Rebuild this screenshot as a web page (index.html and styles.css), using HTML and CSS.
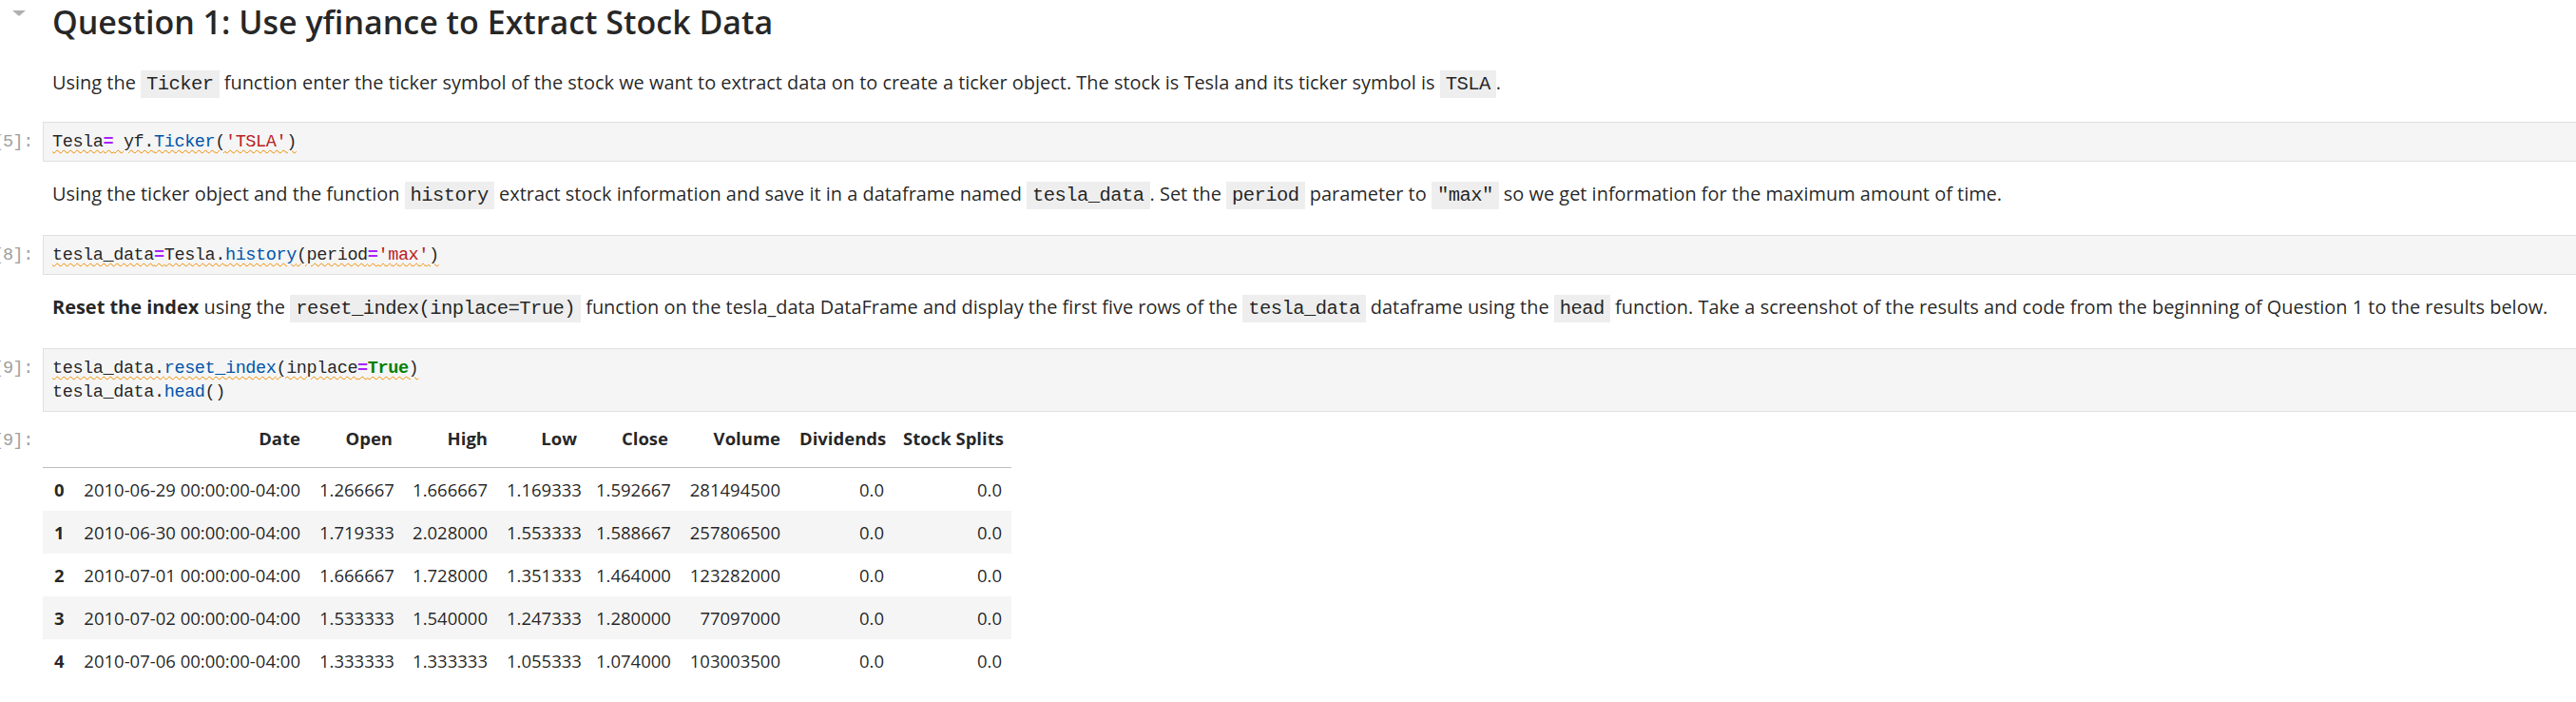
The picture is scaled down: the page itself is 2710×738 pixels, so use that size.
FILE: index.html
```html
<!DOCTYPE html>
<html lang="en">
<head>
<meta charset="utf-8">
<title>Question 1: Use yfinance to Extract Stock Data</title>
<link rel="stylesheet" href="styles.css">
</head>
<body>
<div class="notebook">

  <div class="cell heading-cell">
    <div class="prompt collapser"><span class="caret"></span></div>
    <div class="md"><h1>Question 1: Use yfinance to Extract Stock Data</h1></div>
  </div>

  <div class="cell md-cell md-first">
    <div class="prompt"></div>
    <div class="md"><p>Using the <code>Ticker</code> function enter the ticker symbol of the stock we want to extract data on to create a ticker object. The stock is Tesla and its ticker symbol is <code>TSLA</code>.</p></div>
  </div>

  <div class="cell code-cell">
    <div class="prompt">[5]:</div>
    <div class="editor"><pre><span class="squiggle">Tesla<span class="op">=</span> yf.<span class="fn">Ticker</span>(<span class="str">'TSLA'</span>)</span></pre></div>
  </div>

  <div class="cell md-cell">
    <div class="prompt"></div>
    <div class="md"><p>Using the ticker object and the function <code>history</code> extract stock information and save it in a dataframe named <code>tesla_data</code>. Set the <code>period</code> parameter to <code>"max"</code> so we get information for the maximum amount of time.</p></div>
  </div>

  <div class="cell code-cell">
    <div class="prompt">[8]:</div>
    <div class="editor"><pre><span class="squiggle">tesla_data<span class="op">=</span>Tesla.<span class="fn">history</span>(period<span class="op">=</span><span class="str">'max'</span>)</span></pre></div>
  </div>

  <div class="cell md-cell">
    <div class="prompt"></div>
    <div class="md"><p><strong>Reset the index</strong> using the <code>reset_index(inplace=True)</code> function on the tesla_data DataFrame and display the first five rows of the <code>tesla_data</code> dataframe using the <code>head</code> function. Take a screenshot of the results and code from the beginning of Question 1 to the results below.</p></div>
  </div>

  <div class="cell code-cell">
    <div class="prompt">[9]:</div>
    <div class="editor"><pre><span class="squiggle">tesla_data.<span class="fn">reset_index</span>(inplace<span class="op">=</span><span class="kw">True</span>)</span>
tesla_data.<span class="fn">head</span>()</pre></div>
  </div>

  <div class="cell output-cell">
    <div class="prompt out">[9]:</div>
    <div class="output">
      <table class="df">
        <colgroup>
          <col class="w-idx"><col class="w-date"><col class="w-open"><col class="w-high"><col class="w-low"><col class="w-close"><col class="w-vol"><col class="w-div"><col class="w-split">
        </colgroup>
        <thead>
          <tr><th></th><th>Date</th><th>Open</th><th>High</th><th>Low</th><th>Close</th><th>Volume</th><th>Dividends</th><th>Stock Splits</th></tr>
        </thead>
        <tbody>
          <tr><th>0</th><td>2010-06-29 00:00:00-04:00</td><td>1.266667</td><td>1.666667</td><td>1.169333</td><td>1.592667</td><td>281494500</td><td>0.0</td><td>0.0</td></tr>
          <tr><th>1</th><td>2010-06-30 00:00:00-04:00</td><td>1.719333</td><td>2.028000</td><td>1.553333</td><td>1.588667</td><td>257806500</td><td>0.0</td><td>0.0</td></tr>
          <tr><th>2</th><td>2010-07-01 00:00:00-04:00</td><td>1.666667</td><td>1.728000</td><td>1.351333</td><td>1.464000</td><td>123282000</td><td>0.0</td><td>0.0</td></tr>
          <tr><th>3</th><td>2010-07-02 00:00:00-04:00</td><td>1.533333</td><td>1.540000</td><td>1.247333</td><td>1.280000</td><td>77097000</td><td>0.0</td><td>0.0</td></tr>
          <tr><th>4</th><td>2010-07-06 00:00:00-04:00</td><td>1.333333</td><td>1.333333</td><td>1.055333</td><td>1.074000</td><td>103003500</td><td>0.0</td><td>0.0</td></tr>
        </tbody>
      </table>
    </div>
  </div>

</div>
</body>
</html>
```

FILE: styles.css
```css
html, body {
  margin: 0;
  padding: 0;
  background: #ffffff;
}

body {
  font-family: "Open Sans", "Noto Sans", sans-serif;
  color: rgba(0, 0, 0, 0.87);
  overflow: hidden;
}

.notebook {
  display: flex;
  flex-direction: column;
}

.cell {
  display: flex;
  align-items: flex-start;
}

.prompt {
  flex: none;
  width: 45px;
  box-sizing: border-box;
  padding-right: 10px;
  padding-top: 9px;
  display: flex;
  justify-content: flex-end;
  white-space: nowrap;
  font-family: "Liberation Mono", "DejaVu Sans Mono", monospace;
  font-size: 18.5px;
  letter-spacing: -0.4px;
  line-height: 25px;
  color: #a0a0a0;
}

.collapser {
  justify-content: flex-start;
  padding: 10px 0 0 13px;
}

.caret {
  width: 0;
  height: 0;
  border-left: 7px solid transparent;
  border-right: 7px solid transparent;
  border-top: 6px solid #b0b0b0;
}

.md {
  flex: 1;
  min-width: 0;
  padding-left: 10px;
}

/* heading */
.heading-cell {
  padding-top: 1px;
}

h1 {
  margin: 0;
  font-size: 34px;
  font-weight: 600;
  line-height: 44px;
  color: rgba(0, 0, 0, 0.87);
}

/* markdown */
.md-cell {
  padding-top: 17px;
  padding-bottom: 24px;
}

.md-first {
  padding-top: 25px;
  padding-bottom: 22px;
}

.md p {
  margin: 0;
  font-size: 19.95px;
  line-height: 34px;
  white-space: nowrap;
}

.md strong {
  font-weight: 700;
}

.md code {
  font-family: "Liberation Mono", "DejaVu Sans Mono", monospace;
  font-size: 20.5px;
  letter-spacing: -0.55px;
  background: #eeeeee;
  padding: 3px 6px;
  color: rgba(0, 0, 0, 0.87);
}

/* code cells */
.editor {
  flex: 1;
  min-width: 0;
  background: #f5f5f5;
  border: 1px solid #e0e0e0;
  border-right: 0;
  padding: 8px 9px 7px;
}

.editor pre {
  margin: 0;
  font-family: "Liberation Mono", "DejaVu Sans Mono", monospace;
  font-size: 18.5px;
  letter-spacing: -0.4px;
  line-height: 25px;
  color: rgba(0, 0, 0, 0.87);
}

.squiggle {
  text-decoration-line: underline;
  text-decoration-style: wavy;
  text-decoration-color: #f08c00;
  text-decoration-thickness: 1px;
  text-underline-offset: 3px;
}

.op {
  color: #aa22ff;
  font-weight: 700;
}

.fn {
  color: #0055aa;
}

.str {
  color: #ba2121;
}

.kw {
  color: #008000;
  font-weight: 700;
}

/* output */
.output-cell {
  padding-top: 11px;
}

.prompt.out {
  padding-top: 7px;
}

.output {
  flex: 1;
  min-width: 0;
}

.df {
  border-collapse: collapse;
  border-spacing: 0;
  table-layout: fixed;
  width: 1019px;
  font-size: 18.5px;
  color: rgba(0, 0, 0, 0.87);
}

.w-idx { width: 26px; }
.w-date { width: 255px; }
.w-open { width: 97px; }
.w-high { width: 100px; }
.w-low { width: 94px; }
.w-close { width: 96px; }
.w-vol { width: 118px; }
.w-div { width: 109px; }
.w-split { width: 124px; }

.df th,
.df td {
  padding: 0 10px;
  text-align: right;
  white-space: nowrap;
  vertical-align: middle;
  font-weight: 400;
}

.df thead th {
  height: 33px;
  padding-bottom: 14px;
  border-bottom: 1px solid #bdbdbd;
  font-weight: 700;
}

.df tbody tr {
  height: 45px;
}

.df tbody tr:nth-child(even) {
  background: #f5f5f5;
}

.df tbody th {
  text-align: left;
  padding: 0 0 0 12px;
  font-weight: 700;
}
```
